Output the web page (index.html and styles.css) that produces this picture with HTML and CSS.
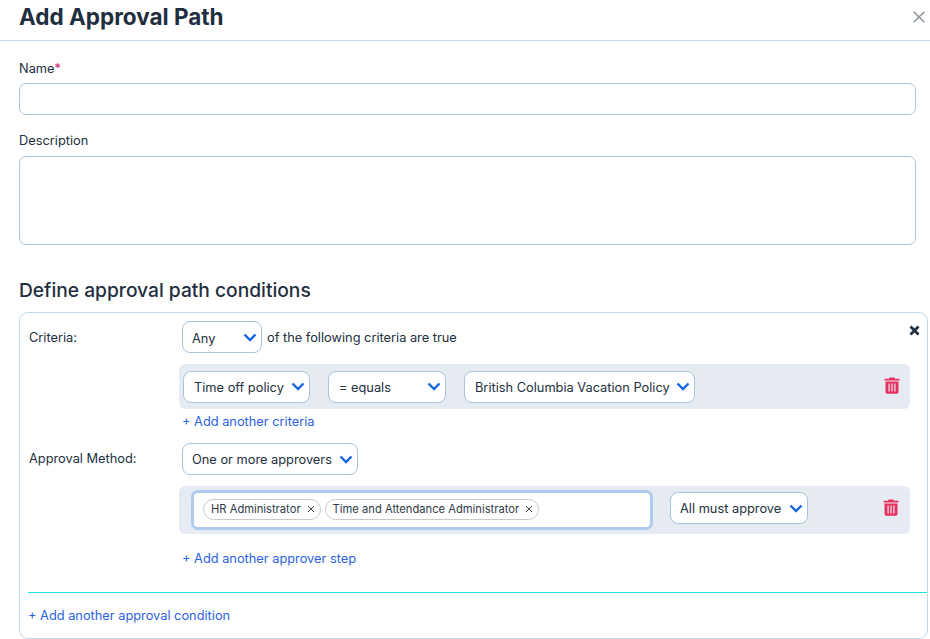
FILE: index.html
```html
<!DOCTYPE html>
<html lang="en">
<head>
<meta charset="utf-8">
<title>Add Approval Path</title>
<link rel="stylesheet" href="styles.css">
</head>
<body>
<header class="header">
  <h1 class="title">Add Approval Path</h1>
  <svg class="close" width="12" height="12" viewBox="0 0 12 12"><path d="M.7.7l10.600 10.600M11.300.7L.7 11.300" stroke="#8b95a0" stroke-width="1.600" fill="none"/></svg>
</header>
<main class="body">
  <label class="label label-name">Name<span class="req">*</span></label>
  <div class="input"></div>
  <label class="label label-desc">Description</label>
  <div class="textarea"></div>
  <h2 class="section">Define approval path conditions</h2>
  <section class="card">
    <svg class="card-x" width="11" height="11" viewBox="0 0 11 11"><path d="M1.500 1.500l8 8M9.500 1.500l-8 8" stroke="#1f2f3f" stroke-width="2.800" fill="none"/></svg>
    <div class="grid">
      <div class="row-label crit-label">Criteria:</div>
      <div class="row-main">
        <div class="line">
          <div class="select sel-any"><span class="any-text">Any</span><svg class="chev" width="14" height="9" viewBox="0 0 14 9"><path d="M1.500 1.500L7 7l5.500-5.500" stroke="#1565e0" stroke-width="2.400" fill="none"/></svg></div>
          <span class="text">of the following criteria are true</span>
        </div>
        <div class="band band-crit">
          <div class="select sel-policy"><span>Time off policy</span><svg class="chev" width="14" height="9" viewBox="0 0 14 9"><path d="M1.500 1.500L7 7l5.500-5.500" stroke="#1565e0" stroke-width="2.400" fill="none"/></svg></div>
          <div class="select sel-eq"><span>= equals</span><svg class="chev" width="14" height="9" viewBox="0 0 14 9"><path d="M1.500 1.500L7 7l5.500-5.500" stroke="#1565e0" stroke-width="2.400" fill="none"/></svg></div>
          <div class="select sel-bc"><span>British Columbia Vacation Policy</span><svg class="chev" width="14" height="9" viewBox="0 0 14 9"><path d="M1.500 1.500L7 7l5.500-5.500" stroke="#1565e0" stroke-width="2.400" fill="none"/></svg></div>
          <svg class="trash trash-crit" width="16" height="18" viewBox="0 0 16 18"><path d="M5.500 1.500h5L11 2.800h4.500v1.700H.5V2.800H5z" fill="#e8305f"/><path fill-rule="evenodd" d="M1.500 5.500h13v10.500a1.700 1.700 0 0 1-1.700 1.700H3.200a1.700 1.700 0 0 1-1.700-1.700zM4.500 7.500v8h1.200v-8zM7.400 7.500v8h1.200v-8zM10.300 7.500v8h1.200v-8z" fill="#e8305f"/></svg>
        </div>
        <a class="link link-crit">+ Add another criteria</a>
      </div>
      <div class="row-label method-label">Approval Method:</div>
      <div class="row-main">
        <div class="select sel-one"><span>One or more approvers</span><svg class="chev" width="14" height="9" viewBox="0 0 14 9"><path d="M1.500 1.500L7 7l5.500-5.500" stroke="#1565e0" stroke-width="2.400" fill="none"/></svg></div>
        <div class="band band-appr">
          <div class="tags">
            <span class="tag">HR Administrator<svg class="tag-x" width="8" height="8" viewBox="0 0 8 8"><path d="M1 1l6 6M7 1L1 7" stroke="#3a4550" stroke-width="1" fill="none"/></svg></span>
            <span class="tag">Time and Attendance Administrator<svg class="tag-x" width="8" height="8" viewBox="0 0 8 8"><path d="M1 1l6 6M7 1L1 7" stroke="#3a4550" stroke-width="1" fill="none"/></svg></span>
          </div>
          <div class="select sel-all"><span>All must approve</span><svg class="chev" width="14" height="9" viewBox="0 0 14 9"><path d="M1.500 1.500L7 7l5.500-5.500" stroke="#1565e0" stroke-width="2.400" fill="none"/></svg></div>
          <svg class="trash trash-appr" width="16" height="18" viewBox="0 0 16 18"><path d="M5.500 1.500h5L11 2.800h4.500v1.700H.5V2.800H5z" fill="#e8305f"/><path fill-rule="evenodd" d="M1.500 5.500h13v10.500a1.700 1.700 0 0 1-1.700 1.700H3.200a1.700 1.700 0 0 1-1.700-1.700zM4.500 7.500v8h1.200v-8zM7.400 7.500v8h1.200v-8zM10.300 7.500v8h1.200v-8z" fill="#e8305f"/></svg>
        </div>
        <a class="link link-appr">+ Add another approver step</a>
      </div>
    </div>
    <div class="card-foot"><a class="link">+ Add another approval condition</a></div>
  </section>
</main>
</body>
</html>
```

FILE: styles.css
```css
* { box-sizing: border-box; }
html, body { margin: 0; padding: 0; }
body {
  width: 930px;
  height: 639px;
  overflow: hidden;
  background: #fff;
  color: #22303e;
  font-family: Inter, "Liberation Sans", sans-serif;
  font-size: 12.8px;
  line-height: 16px;
}
.header {
  height: 41px;
  border-bottom: 1px solid #c3d8e4;
  padding: 0 5px 6px 19px;
  display: flex;
  align-items: center;
  justify-content: space-between;
}
.title { margin: 0; font-size: 22.5px; line-height: 34px; font-weight: 700; color: #1f2f3f; }
.close { display: block; }
.body { padding: 20px 14px 0 19px; }
.label { display: block; color: #22303e; }
.req { color: #d3146e; }
.input, .textarea {
  width: 897px;
  border: 1px solid #aac4da;
  border-radius: 7px;
  background: #fff;
}
.input { height: 32px; margin-top: 6px; }
.label-desc { margin-top: 18px; }
.textarea { height: 89px; margin-top: 7px; }
.section { margin: 33px 0 10px; font-size: 19.2px; line-height: 24px; font-weight: 500; color: #1f2f3f; }
.card {
  position: relative;
  width: 909px;
  height: 327px;
  border: 1px solid #c3d8e4;
  border-radius: 9px;
  padding: 8px 0 0 8px;
}
.card-x { position: absolute; top: 12px; right: 7px; }
.grid { display: grid; grid-template-columns: 151px 731px; }
.row-label { color: #22303e; }
.crit-label { padding: 9px 0 0 1px; }
.method-label { padding: 8px 0 0 1px; }
.row-main { min-width: 0; }
.line { display: flex; align-items: center; padding-left: 3px; height: 32px; }
.text { margin-left: 5px; padding-top: 1px; }
.select {
  display: flex;
  align-items: center;
  justify-content: space-between;
  height: 32px;
  border: 1px solid #aac4da;
  border-radius: 8px;
  background: #fff;
  padding: 0 4px 0 9px;
  color: #22303e;
  flex: none;
}
.select span { padding-top: 2px; }
.select .any-text { padding-top: 4px; }
.chev { display: block; flex: none; }
.sel-any { width: 80px; }
.sel-policy { width: 127px; padding-left: 10px; }
.sel-eq { width: 118px; margin-left: 18px; padding-left: 10px; }
.sel-bc { width: 231px; margin-left: 18px; padding-left: 10px; }
.sel-one { width: 176px; margin-left: 3px; }
.sel-all { width: 138px; margin-left: 17px; margin-bottom: 4px; }
.band {
  display: flex;
  align-items: center;
  background: #e6ebf3;
  border-radius: 6px;
  width: 731px;
  padding-left: 4px;
}
.band-crit { height: 45px; margin-top: 11px; }
.band-appr { height: 48px; margin-top: 11px; padding-left: 12px; }
.trash { display: block; flex: none; margin-left: auto; }
.trash-crit { margin-right: 10px; margin-top: -3px; }
.trash-appr { margin-right: 11px; margin-top: -7px; }
.tags {
  width: 462px;
  height: 40px;
  display: flex;
  align-items: center;
  gap: 4px;
  flex: none;
  padding: 0 0 2px 9px;
  background: #fff;
  border: 3px solid #aecbee;
  border-radius: 7px;
}
.tag {
  display: inline-flex;
  align-items: center;
  height: 21px;
  padding: 0 5px 0 7px;
  border: 1px solid #c9c9c9;
  border-radius: 11px;
  background: #fff;
  font-size: 11.2px;
  color: #2f3b47;
  white-space: nowrap;
}
.tag-x { display: block; margin-left: 6px; }
.link { display: block; color: #2b62e3; }
.link-crit { margin: 5px 0 0 3px; height: 29px; }
.link-appr { margin: 17px 0 0 3px; }
.card-foot {
  position: absolute;
  left: 8px;
  right: 0;
  top: 279px;
  border-top: 1px solid #1de3e8;
  padding-top: 15px;
}
```
